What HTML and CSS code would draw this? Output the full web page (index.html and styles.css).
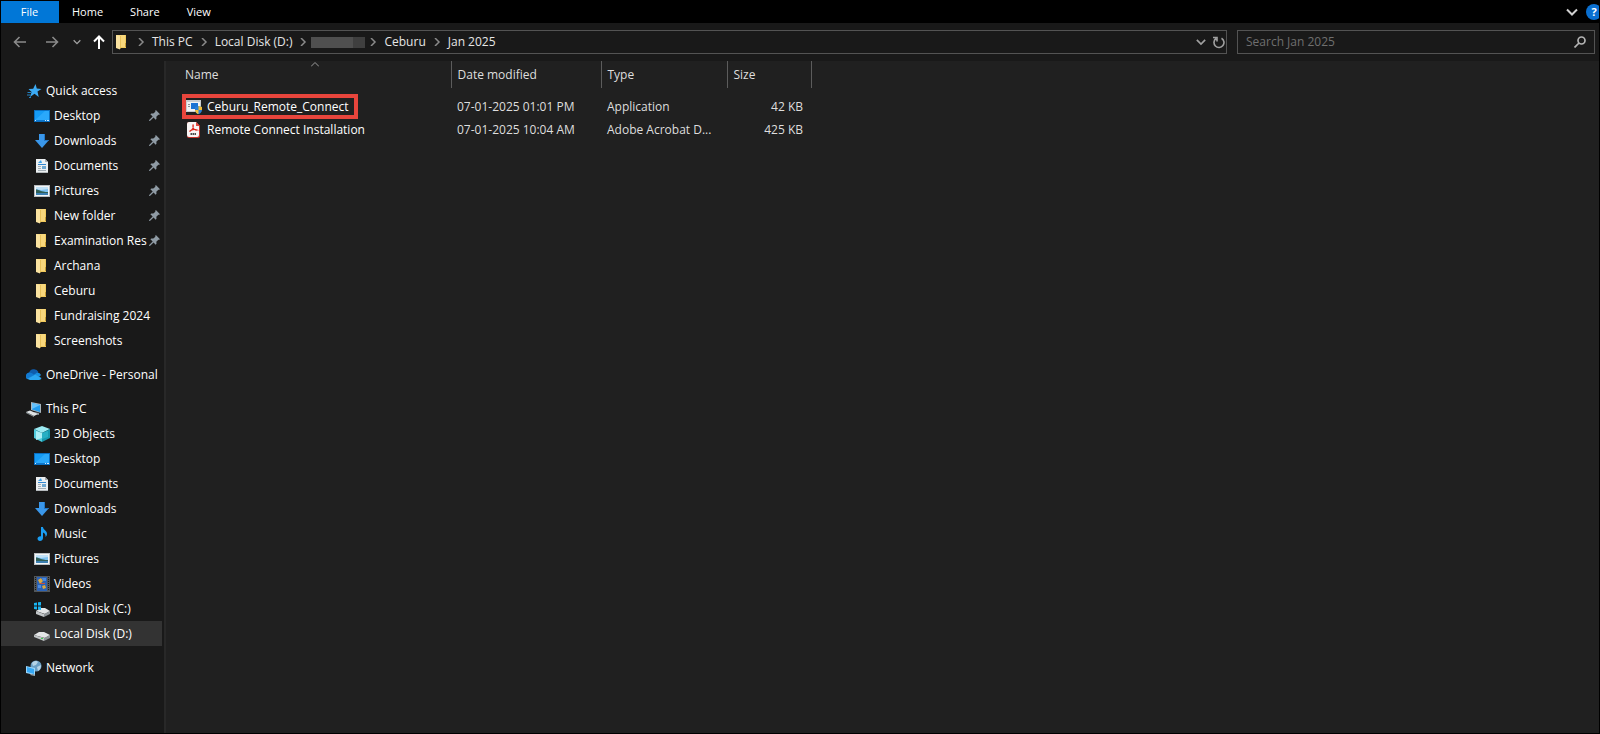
FILE: index.html
```
<!DOCTYPE html>
<html lang="en">
<head>
    <meta charset="UTF-8">
    <meta name="viewport" content="width=device-width, initial-scale=1.0">
    <title>Jan 2025</title>
    <link rel="stylesheet" href="styles.css">
</head>
<body>
    <!-- Icon set -->
    <svg class="sprite" aria-hidden="true">
        <symbol id="i-folder" viewBox="1 0 16 16">
            <path d="M3 1h10v13H3z" fill="#f0c95c"/>
            <path d="M4 1h8v12H4z" fill="#f8d77c"/>
            <path d="M3 1l4 1v13.500L3 14z" fill="#fbe3a0"/>
            <path d="M7 2v13l1-1V2z" fill="#e8c15a"/>
            <path d="M12 9h1v4h-1z" fill="#c99d33"/>
        </symbol>
        <symbol id="i-star" viewBox="0 0 16 16">
            <path d="M9.500 1l1.300 4.600 4.700.3-4 2.700 1.200 5.400-4.200-3.200L4 14l1.600-5L2.500 6l4.700-.3z" fill="#3cabf4"/>
            <path d="M1.500 9.500h4M1 12h3.500M3 14.500h2" stroke="#2383c4" stroke-width="1"/>
        </symbol>
        <symbol id="i-desktop" viewBox="0 0 16 16">
            <path d="M0 2h16v12H0z" fill="#0a6fc2"/>
            <path d="M1 3h14v9H1z" fill="#159bf5"/>
            <path d="M1 12L11 3h4v9z" fill="#2aa8fb"/>
            <path d="M1 12h14v1H1z" fill="#0c79cf"/>
            <path d="M1 12h1v1H1zM11 12h1v1h-1zM13 12h2v1h-2z" fill="#cfe9ff"/>
        </symbol>
        <symbol id="i-download" viewBox="0 0 16 16">
            <path d="M5 1h6v6h4l-7 8-7-8h4z" fill="#3a97ea"/>
            <path d="M10 1h1v6h4l-1 1h-4z" fill="#2277c6"/>
        </symbol>
        <symbol id="i-document" viewBox="0 0 16 16">
            <path d="M2 1h9l3 3v11H2z" fill="#eceff1"/>
            <path d="M11 1v3h3z" fill="#a9b0b5"/>
            <path d="M4 8.500h3M4 10.500h3M4 12.500h8" stroke="#a3aeb6"/>
            <path d="M4 6.500h8" stroke="#3487cf"/>
            <path d="M4 5l3-3 1 3z" fill="#3aa0e8"/>
            <path d="M8 8h4v3H8z" fill="#6ea7d0"/>
            <path d="M2 14h12v1H2z" fill="#b5babd"/>
        </symbol>
        <symbol id="i-picture" viewBox="0 0 16 16">
            <path d="M0 2h16v12H0z" fill="#b8bdc1"/>
            <path d="M1 3h14v10H1z" fill="#f4f6f7"/>
            <path d="M2 4h12v8H2z" fill="#7fc3f2"/>
            <path d="M2 4h12v2L7 7 2 6z" fill="#c1e2f8"/>
            <path d="M2 6.500c3 0 5 2.500 12 2.500v3H2z" fill="#2f5f57"/>
            <path d="M2 10h12v2H2z" fill="#3b7fb2"/>
        </symbol>
        <symbol id="i-cloud" viewBox="0 1 16 16">
            <path d="M3 8a5 5 0 0 1 9.500-2L9 9z" fill="#0f5cad"/>
            <path d="M3 6.500a3.700 3.700 0 0 0-1.500 6.800L9 9 5.500 7a4 4 0 0 0-2.500-.5z" fill="#1279d0"/>
            <path d="M8 9l3-2.500a4 4 0 0 1 4 2.500l-2 2z" fill="#1a8ee0"/>
            <path d="M1.500 12.800L9 8.500l6.500 3.500A2.600 2.600 0 0 1 13 14H4a4 4 0 0 1-2.500-1.200z" fill="#2ba6f2"/>
        </symbol>
        <symbol id="i-pc" viewBox="0 0 16 16">
            <path d="M5 1l10 2v9L5 9z" fill="#a9b6be"/>
            <path d="M6 2l8 2v7L6 8.500z" fill="#219cf0"/>
            <path d="M6 2l8 2-8 4z" fill="#66c1fb"/>
            <path d="M8 11l5 1v2l-4-1z" fill="#8d979d"/>
            <path d="M0 11l4-1.500 8 3.500-4 2z" fill="#dfe3e5"/>
            <path d="M0 11l8 4v1l-8-4z" fill="#8f989d"/>
        </symbol>
        <symbol id="i-cube" viewBox="0 0 16 16">
            <path d="M8 0l8 3-8 4-8-4z" fill="#9beaf2"/>
            <path d="M0 3l8 4v9l-8-4z" fill="#50cbdc"/>
            <path d="M16 3L8 7v9l8-4z" fill="#1698ae"/>
            <path d="M2 5l6 2v5l-6 2z" fill="#a9eef5"/>
            <path d="M8 7l6-2v6l-6 2z" fill="#27afc4"/>
        </symbol>
        <symbol id="i-music" viewBox="0 0 16 16">
            <path d="M7 1h2c0 3 4 3.500 4 7 0 1.500-1 2.500-1.500 3C12 8 10 7 9 6.500V12c0 2-1.500 3-3 3s-2.500-1-2.500-2.200C3.500 11 5.500 10 7 10.500z" fill="#1a9df2"/>
        </symbol>
        <symbol id="i-video" viewBox="0 0 16 16">
            <path d="M0 0h16v16H0z" fill="#51565a"/>
            <path d="M3 1h10v14H3z" fill="#2b62b5"/>
            <path d="M4 4l3-2 2 3-3 3zM8 10l3-1 1 3-3 1z" fill="#dda93c"/>
            <path d="M8 2h4v3H9zM4 9h3v3H4z" fill="#4b8ade"/>
            <path d="M6 7h5v1H6z" fill="#c3543c"/>
            <path d="M1.500 1v14M14.500 1v14" stroke="#191919" stroke-dasharray="1 1"/>
        </symbol>
        <symbol id="i-drive" viewBox="0 0 16 16">
            <path d="M0 9l5-3h5l6 3-5 3z" fill="#e4e6e7"/>
            <path d="M0 9l10 3v3L0 11z" fill="#c2c6c8"/>
            <path d="M16 9l-6 3v3l6-3z" fill="#8e9396"/>
            <path d="M7 12h2v1H7z" fill="#3ed04f"/>
        </symbol>
        <symbol id="i-windrive" viewBox="0 0 16 16">
            <path d="M2 10l5-3h4l5 3-5 3z" fill="#e4e6e7"/>
            <path d="M2 10l8 3v3l-8-3z" fill="#c2c6c8"/>
            <path d="M16 10l-6 3v3l6-3z" fill="#8e9396"/>
            <path d="M0 2l3-.5v3H0zM4 1.300L7 1v3.500H4zM0 5.500h3v3L0 8zM4 5.500h3V9l-3-.4z" fill="#19b4f1"/>
        </symbol>
        <symbol id="i-network" viewBox="0 0 16 16">
            <circle cx="10" cy="6" r="5.500" fill="#6b9fc4"/>
            <path d="M6 3c3-3 5-2 6-1l-2 3-3 1zM11 7l4-2c0 3-1 5-3 6z" fill="#b5d3e6"/>
            <path d="M0 6l9 2v7l-9-2z" fill="#9cd7fb"/>
            <path d="M1 7l7 2v5l-7-2z" fill="#36a8f5"/>
            <path d="M5 14l4 1v1l-5-1z" fill="#a3abb0"/>
        </symbol>
        <symbol id="i-pin" viewBox="0 0 12 12">
            <path d="M7.500 0L12 4.500l-1 .8-.8-.2L8 7.300l.2 2.200-1 1L5 8.200 1 12l-1-.2L.2 11 4 7 1.500 4.700l1-1 2.200.2L7 1.800 6.700 1z" fill="#8f9ba5"/>
        </symbol>
        <symbol id="i-app" viewBox="0 0 16 16">
            <path d="M0 1h15v12H0z" fill="#c9cdd0"/>
            <path d="M1 3h13v9H1z" fill="#f1f3f4"/>
            <path d="M5 4h7v6H5z" fill="#1b73d4"/>
            <path d="M2 5h2v1H2zM2 7h2v1H2z" fill="#8b949b"/>
            <path d="M9 8l3.500-1L16 8v3c0 2-2 4-3.500 4S9 13 9 11z" fill="#2b7fd3"/>
            <path d="M12.500 7L16 8v3h-3.500zM9 11h3.500v4C11 15 9 13 9 11z" fill="#f0bd3a"/>
        </symbol>
        <symbol id="i-pdf" viewBox="0 0 16 16">
            <path d="M3 0h7l4 4v10a2 2 0 0 1-2 2H3a2 2 0 0 1-2-2V2a2 2 0 0 1 2-2z" fill="#c8332b"/>
            <path d="M3 0h7l3 4v9a2 2 0 0 1-2 2H3a2 2 0 0 1-2-2V2a2 2 0 0 1 2-2z" fill="#faf5f5"/>
            <path d="M10 0v4h4z" fill="#e0483f"/>
            <path d="M7 2.500c1 3 0 5-3.500 7 2-2 5-2.500 7.500-1.500-3 .5-4.500-2-4-5.500z" fill="none" stroke="#e0261c" stroke-width="1.200"/>
            <path d="M4.500 12h5.500" stroke="#4d4d4d" stroke-width="2" stroke-dasharray="1.500 .5"/>
        </symbol>
        <symbol id="i-right" viewBox="0 0 8 8">
            <path d="M2 0l4 4-4 4" fill="none" stroke="currentColor" stroke-width="1.500"/>
        </symbol>
        <symbol id="i-down" viewBox="0 0 12 12">
            <path d="M1 3.500l5 5 5-5" fill="none" stroke="currentColor" stroke-width="2"/>
        </symbol>
    </svg>

    <div class="window">
        <nav class="ribbon">
            <button type="button" class="tab tab-file">File</button>
            <button type="button" class="tab">Home</button>
            <button type="button" class="tab">Share</button>
            <button type="button" class="tab">View</button>
            <div class="ribbon-end">
                <button type="button" class="icon-btn expand" aria-label="Expand the ribbon"><svg width="12" height="12"><use href="#i-down"/></svg></button>
                <button type="button" class="help" aria-label="Help">?</button>
            </div>
        </nav>

        <div class="toolbar">
            <div class="nav-buttons">
                <button type="button" class="icon-btn" aria-label="Back"><svg width="14" height="12" viewBox="0 0 14 12"><path d="M13 6H2M6.500 1L1.500 6l5 5" fill="none" stroke="#8a8a8a" stroke-width="1.600"/></svg></button>
                <button type="button" class="icon-btn" aria-label="Forward"><svg width="14" height="12" viewBox="0 0 14 12"><path d="M1 6h11M7.500 1l5 5-5 5" fill="none" stroke="#8a8a8a" stroke-width="1.600"/></svg></button>
                <button type="button" class="icon-btn recent" aria-label="Recent locations"><svg width="8" height="8"><use href="#i-down"/></svg></button>
                <button type="button" class="icon-btn up" aria-label="Up"><svg width="12" height="14" viewBox="0 0 12 14"><path d="M6 14V2M1 6.500l5-5 5 5" fill="none" stroke="#fff" stroke-width="2"/></svg></button>
            </div>
            <div class="address">
                <svg class="icon" width="16" height="16"><use href="#i-folder"/></svg>
                <svg class="sep" width="8" height="8"><use href="#i-right"/></svg>
                <a href="#">This PC</a>
                <svg class="sep" width="8" height="8"><use href="#i-right"/></svg>
                <a href="#">Local Disk (D:)</a>
                <svg class="sep" width="8" height="8"><use href="#i-right"/></svg>
                <span class="redacted"></span>
                <svg class="sep" width="8" height="8"><use href="#i-right"/></svg>
                <a href="#">Ceburu</a>
                <svg class="sep" width="8" height="8"><use href="#i-right"/></svg>
                <a href="#">Jan 2025</a>
                <div class="address-end">
                    <button type="button" class="icon-btn" aria-label="Previous locations"><svg width="10" height="10"><use href="#i-down"/></svg></button>
                    <button type="button" class="icon-btn" aria-label="Refresh"><svg width="12" height="13" viewBox="0 0 12 13"><path d="M8.500 2.200A5 5 0 1 1 3 2.500M0 1.500h4v4" fill="none" stroke="#a0a0a0" stroke-width="1.600"/></svg></button>
                </div>
            </div>
            <div class="search">
                <input type="search" placeholder="Search Jan 2025" aria-label="Search Jan 2025">
                <svg width="12" height="12" viewBox="0 0 12 12"><circle cx="7.500" cy="4.500" r="3.500" fill="none" stroke="#b4b4b4" stroke-width="1.700"/><path d="M5 7l-4.500 4.500" stroke="#b4b4b4" stroke-width="1.700"/></svg>
            </div>
        </div>

        <div class="body">
            <aside class="sidebar">
                <ul class="group">
                    <li><a href="#" class="root"><svg class="icon"><use href="#i-star"/></svg><span>Quick access</span></a></li>
                    <li><a href="#"><svg class="icon"><use href="#i-desktop"/></svg><span>Desktop</span><svg class="pin"><use href="#i-pin"/></svg></a></li>
                    <li><a href="#"><svg class="icon"><use href="#i-download"/></svg><span>Downloads</span><svg class="pin"><use href="#i-pin"/></svg></a></li>
                    <li><a href="#"><svg class="icon"><use href="#i-document"/></svg><span>Documents</span><svg class="pin"><use href="#i-pin"/></svg></a></li>
                    <li><a href="#"><svg class="icon"><use href="#i-picture"/></svg><span>Pictures</span><svg class="pin"><use href="#i-pin"/></svg></a></li>
                    <li><a href="#"><svg class="icon"><use href="#i-folder"/></svg><span>New folder</span><svg class="pin"><use href="#i-pin"/></svg></a></li>
                    <li><a href="#"><svg class="icon"><use href="#i-folder"/></svg><span>Examination Res</span><svg class="pin"><use href="#i-pin"/></svg></a></li>
                    <li><a href="#"><svg class="icon"><use href="#i-folder"/></svg><span>Archana</span></a></li>
                    <li><a href="#"><svg class="icon"><use href="#i-folder"/></svg><span>Ceburu</span></a></li>
                    <li><a href="#"><svg class="icon"><use href="#i-folder"/></svg><span>Fundraising 2024</span></a></li>
                    <li><a href="#"><svg class="icon"><use href="#i-folder"/></svg><span>Screenshots</span></a></li>
                </ul>
                <ul class="group">
                    <li><a href="#" class="root"><svg class="icon"><use href="#i-cloud"/></svg><span>OneDrive - Personal</span></a></li>
                </ul>
                <ul class="group">
                    <li><a href="#" class="root"><svg class="icon"><use href="#i-pc"/></svg><span>This PC</span></a></li>
                    <li><a href="#"><svg class="icon"><use href="#i-cube"/></svg><span>3D Objects</span></a></li>
                    <li><a href="#"><svg class="icon"><use href="#i-desktop"/></svg><span>Desktop</span></a></li>
                    <li><a href="#"><svg class="icon"><use href="#i-document"/></svg><span>Documents</span></a></li>
                    <li><a href="#"><svg class="icon"><use href="#i-download"/></svg><span>Downloads</span></a></li>
                    <li><a href="#"><svg class="icon"><use href="#i-music"/></svg><span>Music</span></a></li>
                    <li><a href="#"><svg class="icon"><use href="#i-picture"/></svg><span>Pictures</span></a></li>
                    <li><a href="#"><svg class="icon"><use href="#i-video"/></svg><span>Videos</span></a></li>
                    <li><a href="#"><svg class="icon"><use href="#i-windrive"/></svg><span>Local Disk (C:)</span></a></li>
                    <li><a href="#" class="selected"><svg class="icon"><use href="#i-drive"/></svg><span>Local Disk (D:)</span></a></li>
                </ul>
                <ul class="group">
                    <li><a href="#" class="root"><svg class="icon"><use href="#i-network"/></svg><span>Network</span></a></li>
                </ul>
            </aside>

            <main class="files">
                <table>
                    <colgroup>
                        <col class="col-name">
                        <col class="col-date">
                        <col class="col-type">
                        <col class="col-size">
                    </colgroup>
                    <thead>
                        <tr>
                            <th>Name<svg class="sort" width="8" height="5" viewBox="0 0 8 5"><path d="M0 4.500l4-4 4 4" fill="none" stroke="#9a9a9a"/></svg></th>
                            <th>Date modified</th>
                            <th>Type</th>
                            <th>Size</th>
                        </tr>
                    </thead>
                    <tbody>
                        <tr>
                            <td><a href="#" class="file marked"><svg class="icon"><use href="#i-app"/></svg>Ceburu_Remote_Connect</a></td>
                            <td>07-01-2025 01:01 PM</td>
                            <td>Application</td>
                            <td class="size">42 KB</td>
                        </tr>
                        <tr>
                            <td><a href="#" class="file"><svg class="icon"><use href="#i-pdf"/></svg>Remote Connect Installation</a></td>
                            <td>07-01-2025 10:04 AM</td>
                            <td>Adobe Acrobat D...</td>
                            <td class="size">425 KB</td>
                        </tr>
                    </tbody>
                </table>
            </main>
        </div>
    </div>
</body>
</html>
```

FILE: styles.css
```
* {
    margin: 0;
    padding: 0;
    box-sizing: border-box;
}

body {
    background: #000;
    color: #fff;
    font-family: 'Segoe UI', 'Open Sans', 'Noto Sans', sans-serif;
    font-size: 12px;
    line-height: 16px;
}

a {
    color: inherit;
    text-decoration: none;
}

button {
    background: none;
    border: none;
    color: inherit;
    font: inherit;
}

.sprite {
    position: absolute;
    width: 0;
    height: 0;
}

.window {
    display: flex;
    flex-direction: column;
    min-height: 100vh;
    border: 1px solid #000;
    border-top: none;
}

/* Ribbon tabs */
.ribbon {
    display: flex;
    height: 23px;
    padding-top: 1px;
    background: #000;
    font-size: 11px;
}

.tab {
    padding: 0 14px 0 13px;
}

.tab-file {
    width: 58px;
    background: #0177d7;
}

.ribbon-end {
    display: flex;
    align-items: center;
    gap: 8px;
    margin-left: auto;
    overflow: hidden;
}

.icon-btn {
    display: flex;
    align-items: center;
    justify-content: center;
    color: #a0a0a0;
}

.expand {
    color: #d0d0d0;
}

.help {
    width: 16px;
    height: 16px;
    margin-right: -3px;
    border-radius: 50%;
    background: #0a6fd0;
    font-weight: 700;
    line-height: 16px;
}

/* Address bar and search */
.toolbar {
    display: flex;
    align-items: center;
    height: 38px;
    padding: 0 4px 0 12px;
    background: #191919;
}

.nav-buttons {
    display: flex;
    align-items: center;
    gap: 18px;
    width: 99px;
    flex-shrink: 0;
}

.recent {
    margin-left: -4px;
}

.up {
    margin-left: -6px;
}

.address,
.search {
    display: flex;
    align-items: center;
    height: 24px;
    border: 1px solid #535353;
}

.address {
    flex: 1;
    padding: 0 1px;
    color: #e6e6e6;
}

.sep {
    margin: 0 7px;
    color: #8a8a8a;
}

.redacted {
    width: 54px;
    height: 11px;
    margin: 0 -3px;
    background: linear-gradient(90deg, #4f4f4f 77%, #3f3f3f 77%);
}

.address-end {
    display: flex;
    gap: 7px;
    margin-left: auto;
}

.search {
    width: 358px;
    margin-left: 10px;
    padding: 0 8px;
}

.search input {
    flex: 1;
    min-width: 0;
    border: none;
    outline: none;
    background: none;
    color: #fff;
    font: inherit;
}

.search input::placeholder {
    color: #6f6f6f;
}

/* Navigation pane */
.body {
    display: flex;
    flex: 1;
}

.sidebar {
    width: 165px;
    flex-shrink: 0;
    padding: 17px 2px 0 0;
    border-right: 2px solid #282828;
    background: #191919;
}

.group {
    margin-bottom: 9px;
    list-style: none;
}

.group a {
    display: flex;
    align-items: center;
    height: 25px;
    padding-left: 33px;
    white-space: nowrap;
}

.group a.root {
    padding-left: 25px;
}

.group a.selected {
    background: #333;
}

.icon {
    width: 16px;
    height: 16px;
    flex-shrink: 0;
}

.group .icon {
    margin-right: 4px;
}

.pin {
    width: 11px;
    height: 11px;
    flex-shrink: 0;
    margin: 0 2px 0 auto;
}

/* File list */
.files {
    flex: 1;
    background: #202020;
}

table {
    width: 645px;
    border-collapse: collapse;
    table-layout: fixed;
}

.col-name {
    width: 285px;
}

.col-date {
    width: 150px;
}

.col-type {
    width: 126px;
}

.col-size {
    width: 84px;
}

th {
    position: relative;
    height: 27px;
    padding-left: 6px;
    border-right: 1px solid #5c5c5c;
    color: #dedede;
    font-weight: 400;
    text-align: left;
}

th:first-child {
    padding-left: 19px;
}

.sort {
    position: absolute;
    top: 1px;
    left: 145px;
}

/* Space between the header and the first row */
tbody::before {
    content: '';
    display: block;
    height: 7px;
}

td {
    height: 23px;
    padding-left: 6px;
    color: #dedede;
    white-space: nowrap;
}

td:first-child {
    padding-left: 20px;
}

.size {
    padding-right: 8px;
    text-align: right;
}

.file {
    display: inline-flex;
    align-items: center;
    gap: 5px;
    height: 17px;
    color: #fff;
    vertical-align: middle;
}

.marked {
    padding-right: 5px;
    outline: 4px solid #e8453c;
}
```
